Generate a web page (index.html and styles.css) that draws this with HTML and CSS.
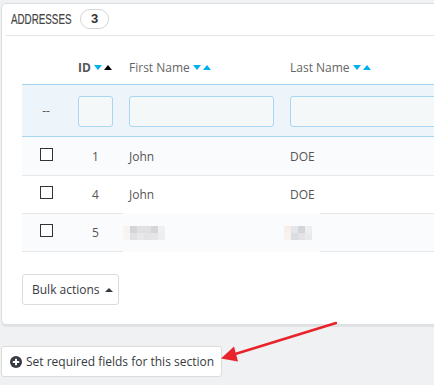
FILE: index.html
```html
<!DOCTYPE html>
<html>
<head>
<meta charset="utf-8">
<link rel="stylesheet" href="styles.css">
</head>
<body>
<div class="page">
  <div class="panel">
    <div class="panel-heading">
      <span class="title"><span class="title-text">ADDRESSES</span></span>
      <span class="badge">3</span>
    </div>
    <table class="grid">
      <colgroup>
        <col class="w-check"><col class="w-id"><col class="w-first"><col class="w-last">
      </colgroup>
      <thead>
        <tr class="head">
          <th class="c-check"></th>
          <th class="c-id"><span class="id-label">ID</span><span class="sort down"></span><span class="sort up active"></span></th>
          <th class="c-first">First Name<span class="sort down"></span><span class="sort up"></span></th>
          <th class="c-last">Last Name<span class="sort down"></span><span class="sort up"></span></th>
        </tr>
        <tr class="filter">
          <td class="c-check">--</td>
          <td class="c-id"><input class="fin fin-id" type="text"></td>
          <td class="c-first"><input class="fin fin-first" type="text"></td>
          <td class="c-last"><input class="fin fin-last" type="text"></td>
        </tr>
      </thead>
      <tbody>
        <tr class="odd">
          <td class="c-check"><span class="cb"></span></td>
          <td class="c-id num">1</td>
          <td class="c-first">John</td>
          <td class="c-last">DOE</td>
        </tr>
        <tr>
          <td class="c-check"><span class="cb"></span></td>
          <td class="c-id num">4</td>
          <td class="c-first">John</td>
          <td class="c-last">DOE</td>
        </tr>
        <tr class="odd">
          <td class="c-check"><span class="cb"></span></td>
          <td class="c-id num">5</td>
          <td class="c-first censor-cell"><div class="censor"><span class="blur blur-a"></span><span class="blur blur-b"></span></div></td>
          <td class="c-last"></td>
        </tr>
      </tbody>
    </table>
    <div class="bulk-row">
      <button class="btn bulk">Bulk actions <span class="caret"></span></button>
    </div>
  </div>
  <div class="footer-row">
    <button class="btn req"><span class="plus"><svg width="12" height="12" viewBox="0 0 12 12"><circle cx="6" cy="6" r="6" fill="#363a41"/><path d="M6 2.8v6.4M2.8 6h6.4" stroke="#fff" stroke-width="2"/></svg></span>Set required fields for this section</button>
  </div>
  <svg class="arrow" width="434" height="385" viewBox="0 0 434 385">
    <line x1="336" y1="323" x2="232" y2="355" stroke="#e8232b" stroke-width="2.4" stroke-linecap="round"/>
    <polygon points="221,358.5 234,346.5 238,361.5" fill="#e8232b"/>
  </svg>
</div>
</body>
</html>
```

FILE: styles.css
```css
* { box-sizing: border-box; }
html, body { margin: 0; padding: 0; }
body {
  background: #eff1f2;
  font-family: "Open Sans", "Liberation Sans", sans-serif;
  font-size: 12px;
  color: #555;
  width: 434px;
  height: 385px;
  overflow: hidden;
}
.page {
  position: relative;
  width: 434px;
  height: 385px;
  padding: 3px 0 0 1px;
}
.panel {
  width: 500px;
  background: #fff;
  border: 1px solid #dcdfe2;
  border-radius: 5px;
  box-shadow: 0 2px 0 rgba(0,0,0,0.06);
  padding: 0 0 19px 0;
}
.panel-heading {
  margin-left: 4px;
  height: 32px;
  border-bottom: 1px solid #e6e6e6;
  display: flex;
  align-items: center;
  padding: 0 0 0 5px;
}
.title {
  display: inline-block;
  width: 61px;
  white-space: nowrap;
}
.title-text {
  display: inline-block;
  font-family: "Liberation Sans", sans-serif;
  font-size: 14px;
  color: #444;
  -webkit-text-stroke: 0.2px #444;
  transform: scaleX(0.7);
  transform-origin: left center;
}
.badge {
  margin-left: 8px;
  height: 20px;
  width: 29px;
  border: 1px solid #d5d5d5;
  border-radius: 10px;
  display: inline-flex;
  align-items: center;
  justify-content: center;
  font-family: "Liberation Sans", sans-serif;
  font-weight: bold;
  font-size: 13px;
  color: #333;
  margin-top: -2px;
}
.grid {
  margin: 16px 0 0 20px;
  border-collapse: separate;
  border-spacing: 0;
  table-layout: fixed;
  width: 470px;
}
.w-check { width: 48px; }
.w-id { width: 51px; }
.w-first { width: 161px; }
.w-last { width: 210px; }
.grid th, .grid td {
  padding: 0 8px;
  text-align: left;
  vertical-align: middle;
  white-space: nowrap;
}
.c-check { text-align: center !important; padding: 0 !important; }
.head th {
  height: 32px;
  font-weight: normal;
  color: #666;
  font-size: 12px;
  padding-bottom: 2px;
}
.id-label { font-weight: bold; color: #555; }
.sort {
  display: inline-block;
  width: 0; height: 0;
  border-left: 4px solid transparent;
  border-right: 4px solid transparent;
  vertical-align: 2px;
}
.sort.down { border-top: 5px solid #00aff0; margin-left: 3px; }
.sort.up { border-bottom: 5px solid #00aff0; margin-left: 2px; }
.sort.up.active { border-bottom-color: #000; }
.filter td {
  background: #edf4fa;
  border-top: 1px solid #a5d5f0;
  border-bottom: 1px solid #a5d5f0;
  height: 53px;
  color: #555;
}
.fin {
  display: block;
  height: 31px;
  border: 1px solid #a9d6f0;
  border-radius: 3px;
  background: #f5f8f9;
  font: inherit;
  margin-top: 1px;
}
.fin-id { width: 35px; }
.fin-first { width: 145px; }
.fin-last { width: 200px; }
tbody td {
  height: 38px;
  border-bottom: 1px solid #e5e7e9;
  color: #555;
  font-size: 12px;
  padding-top: 0;
}
tbody tr.odd td { background: #fafbfd; }
tbody tr:first-child td { height: 39px; }
.num { text-align: center !important; padding: 0 !important; }
.cb {
  display: inline-block;
  width: 13px;
  height: 13px;
  border: 1px solid #333;
  background: #fff;
  vertical-align: middle;
  margin-top: -6px;
  margin-left: 1px;
}
.censor-cell { position: relative; padding: 0 !important; }
.censor {
  position: absolute;
  left: 2px;
  top: -1px;
  width: 197px;
  height: 39px;
  background: #fafbfd;
  border-top: 7px solid #fbfbfc;
  border-bottom: 3px solid #fbfbfc;
  z-index: 1;
}
.blur {
  position: absolute;
  top: 6px;
  height: 14px;
  background-repeat: no-repeat;
  background-size: 100% 50%;
  background-position: top, bottom;
}
.blur-a {
  left: 0;
  width: 42px;
  background-image:
    linear-gradient(to right, #f6f3f1 0 7px, #d5d5d8 7px 14px, #e0e0e3 14px 21px, #e0e0e3 21px 28px, #d5d5d8 28px 35px, #f0f0f2 35px 42px),
    linear-gradient(to right, #f8f6f5 0 7px, #e1e1e4 7px 14px, #e8e8ea 14px 21px, #e3e3e5 21px 28px, #e6e6e8 28px 35px, #eeeef0 35px 42px);
}
.blur-b {
  left: 161px;
  width: 28px;
  background-image:
    linear-gradient(to right, #f6efe9 0 7px, #e4e6ea 7px 14px, #d5d5d8 14px 21px, #eeeef0 21px 28px),
    linear-gradient(to right, #f6f3f1 0 7px, #dcdde0 7px 14px, #e3e3e6 14px 21px, #e9e9ec 21px 28px);
}
.bulk-row { padding: 22px 0 0 20px; }
.btn {
  font-family: "Open Sans", "Liberation Sans", sans-serif;
  font-size: 12px;
  color: #363a41;
  background: #fff;
  border: 1px solid #dcdcdc;
  border-radius: 3px;
  height: 31px;
  display: inline-flex;
  align-items: center;
  cursor: pointer;
}
.bulk { width: 97px; padding: 0 0 0 9px; }
.caret {
  display: inline-block;
  width: 0; height: 0;
  border-left: 4px solid transparent;
  border-right: 4px solid transparent;
  border-bottom: 4px solid #363a41;
  margin-left: 5px;
}
.footer-row { padding: 21px 0 0 0; }
.req { width: 221px; padding: 0 0 0 8px; font-size: 12px; }
.plus { display: inline-flex; margin-right: 4px; }
.arrow { position: absolute; left: 0; top: 0; pointer-events: none; }
```
